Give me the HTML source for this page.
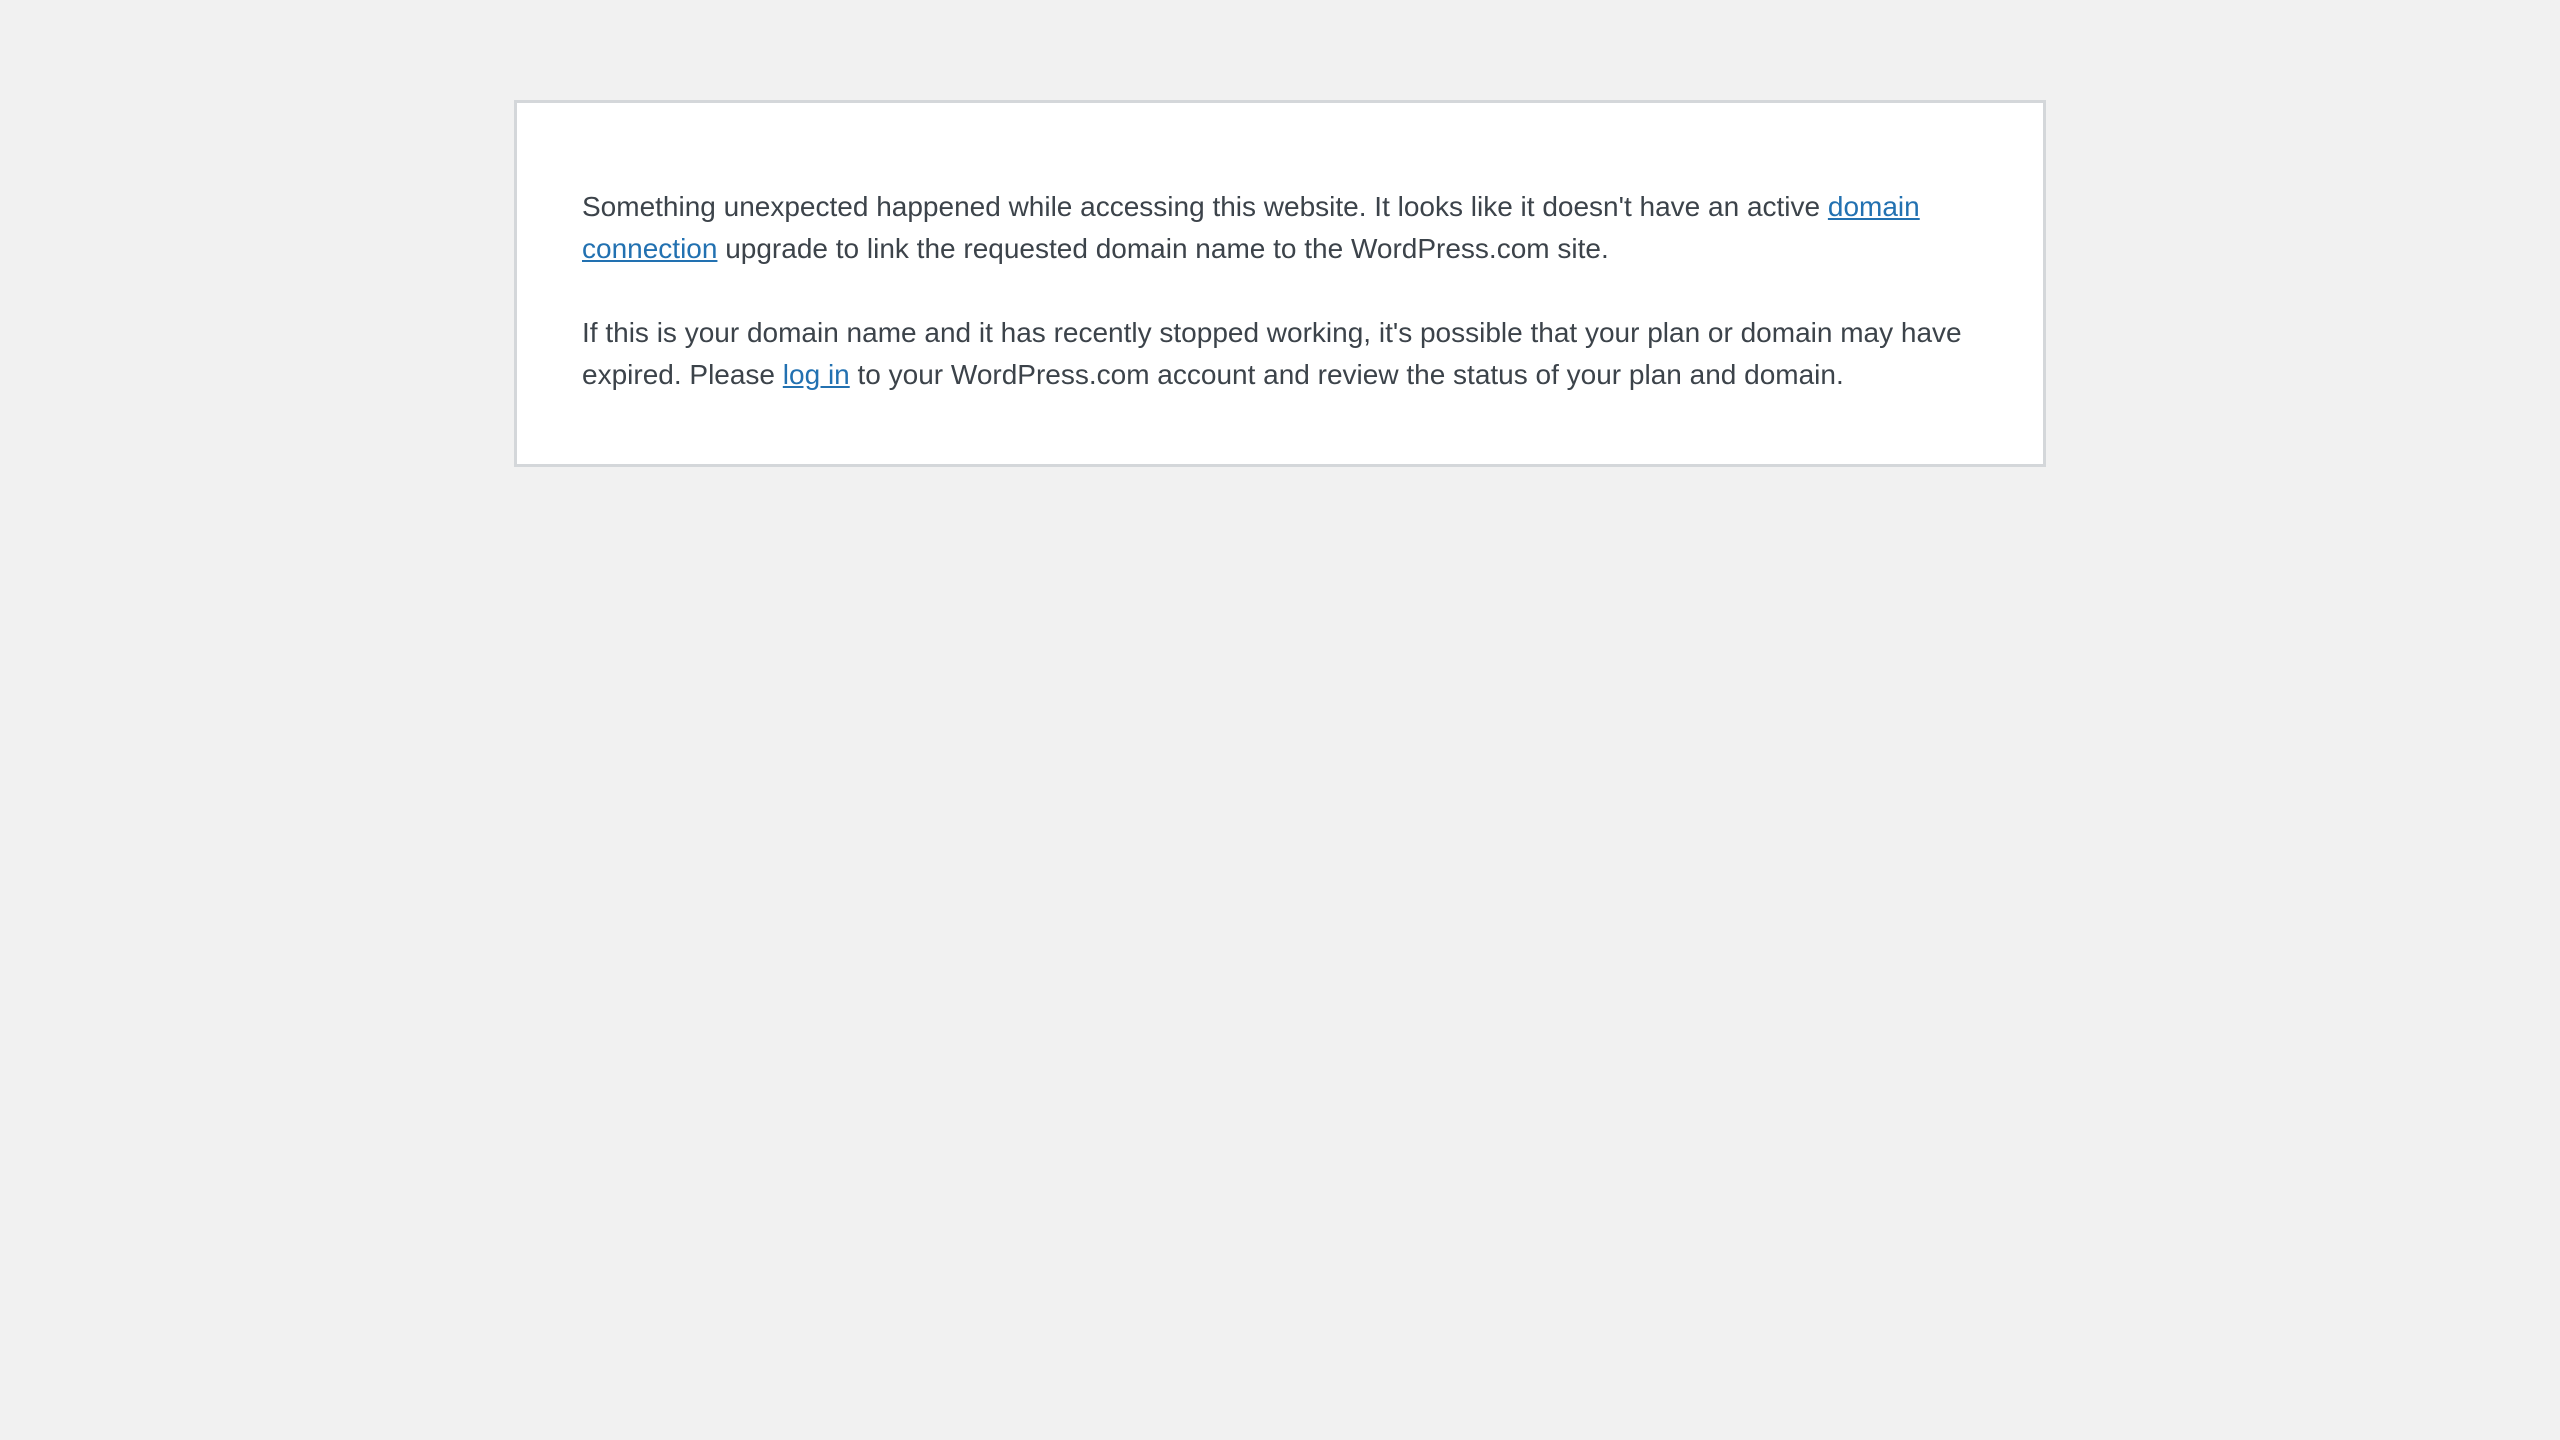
<!DOCTYPE html>
<html><head><meta charset="utf-8"><style>
html,body{margin:0;padding:0;background:#f1f1f1;}
body{width:2560px;height:1440px;position:relative;font-family:"Liberation Sans",sans-serif;}
.box{position:absolute;left:514px;top:100px;width:1526px;height:361px;background:#fff;border:3px solid #d4d7da;box-sizing:content-box;}
p{position:absolute;left:65px;margin:0;font-size:28px;line-height:42px;color:#3c434a;white-space:nowrap;}
a{color:#2271b1;text-decoration:underline;}
</style></head><body>
<div class="box">
<p style="top:83px">Something unexpected happened while accessing this website. It looks like it doesn't have an active <a>domain</a><br><a>connection</a> upgrade to link the requested domain name to the WordPress.com site.</p>
<p style="top:209px">If this is your domain name and it has recently stopped working, it's possible that your plan or domain may have<br>expired. Please <a>log in</a> to your WordPress.com account and review the status of your plan and domain.</p>
</div>
</body></html>
